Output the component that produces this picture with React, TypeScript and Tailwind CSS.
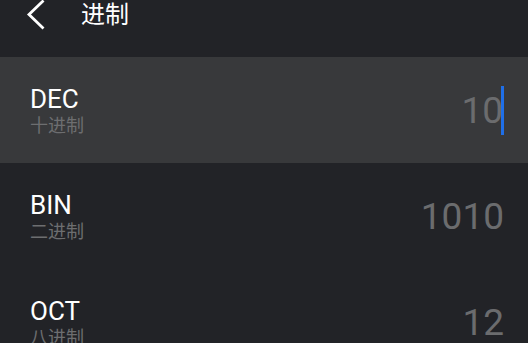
import React from "react";

const latin = { fontFamily: 'Roboto, "Noto Sans CJK SC", sans-serif' };
const cjk = { fontFamily: '"Noto Sans CJK SC", Roboto, sans-serif' };

function Row({ code, name, value, active }: { code: string; name: string; value: string; active?: boolean }) {
  return (
    <div className={`flex h-[106px] items-center justify-between pl-[30px] pr-[24px] ${active ? "bg-[#38393b]" : ""}`}>
      <div className="flex flex-col">
        <div className="text-[26px] leading-[26px] text-white" style={latin}>{code}</div>
        <div className="mt-[2px] text-[18px] leading-[20px] text-[#6d6e70]" style={cjk}>{name}</div>
      </div>
      <div className="flex items-center">
        <span className="pt-[2px] text-[37px] leading-[44px] text-[#6b6c6e]" style={latin}>{value}</span>
        {active && <span className="-ml-[2px] h-[49px] w-[3px] bg-[#1f6fe8]" />}
      </div>
    </div>
  );
}

export default function App() {
  return (
    <div className="h-[343px] w-[528px] overflow-hidden bg-[#222327]">
      <div className="flex h-[57px] items-start">
        <svg className="ml-[26px]" width="20" height="30" viewBox="0 0 20 30" fill="none">
          <path d="M16.5 1.5 L3 14.5 L16.5 27.5" stroke="#fff" strokeWidth="2.8" strokeLinecap="square" />
        </svg>
        <div className="ml-[35px] -mt-[3px] text-[24px] leading-[32px] text-white" style={cjk}>进制</div>
      </div>
      <Row code="DEC" name="十进制" value="10" active />
      <Row code="BIN" name="二进制" value="1010" />
      <Row code="OCT" name="八进制" value="12" />
    </div>
  );
}
